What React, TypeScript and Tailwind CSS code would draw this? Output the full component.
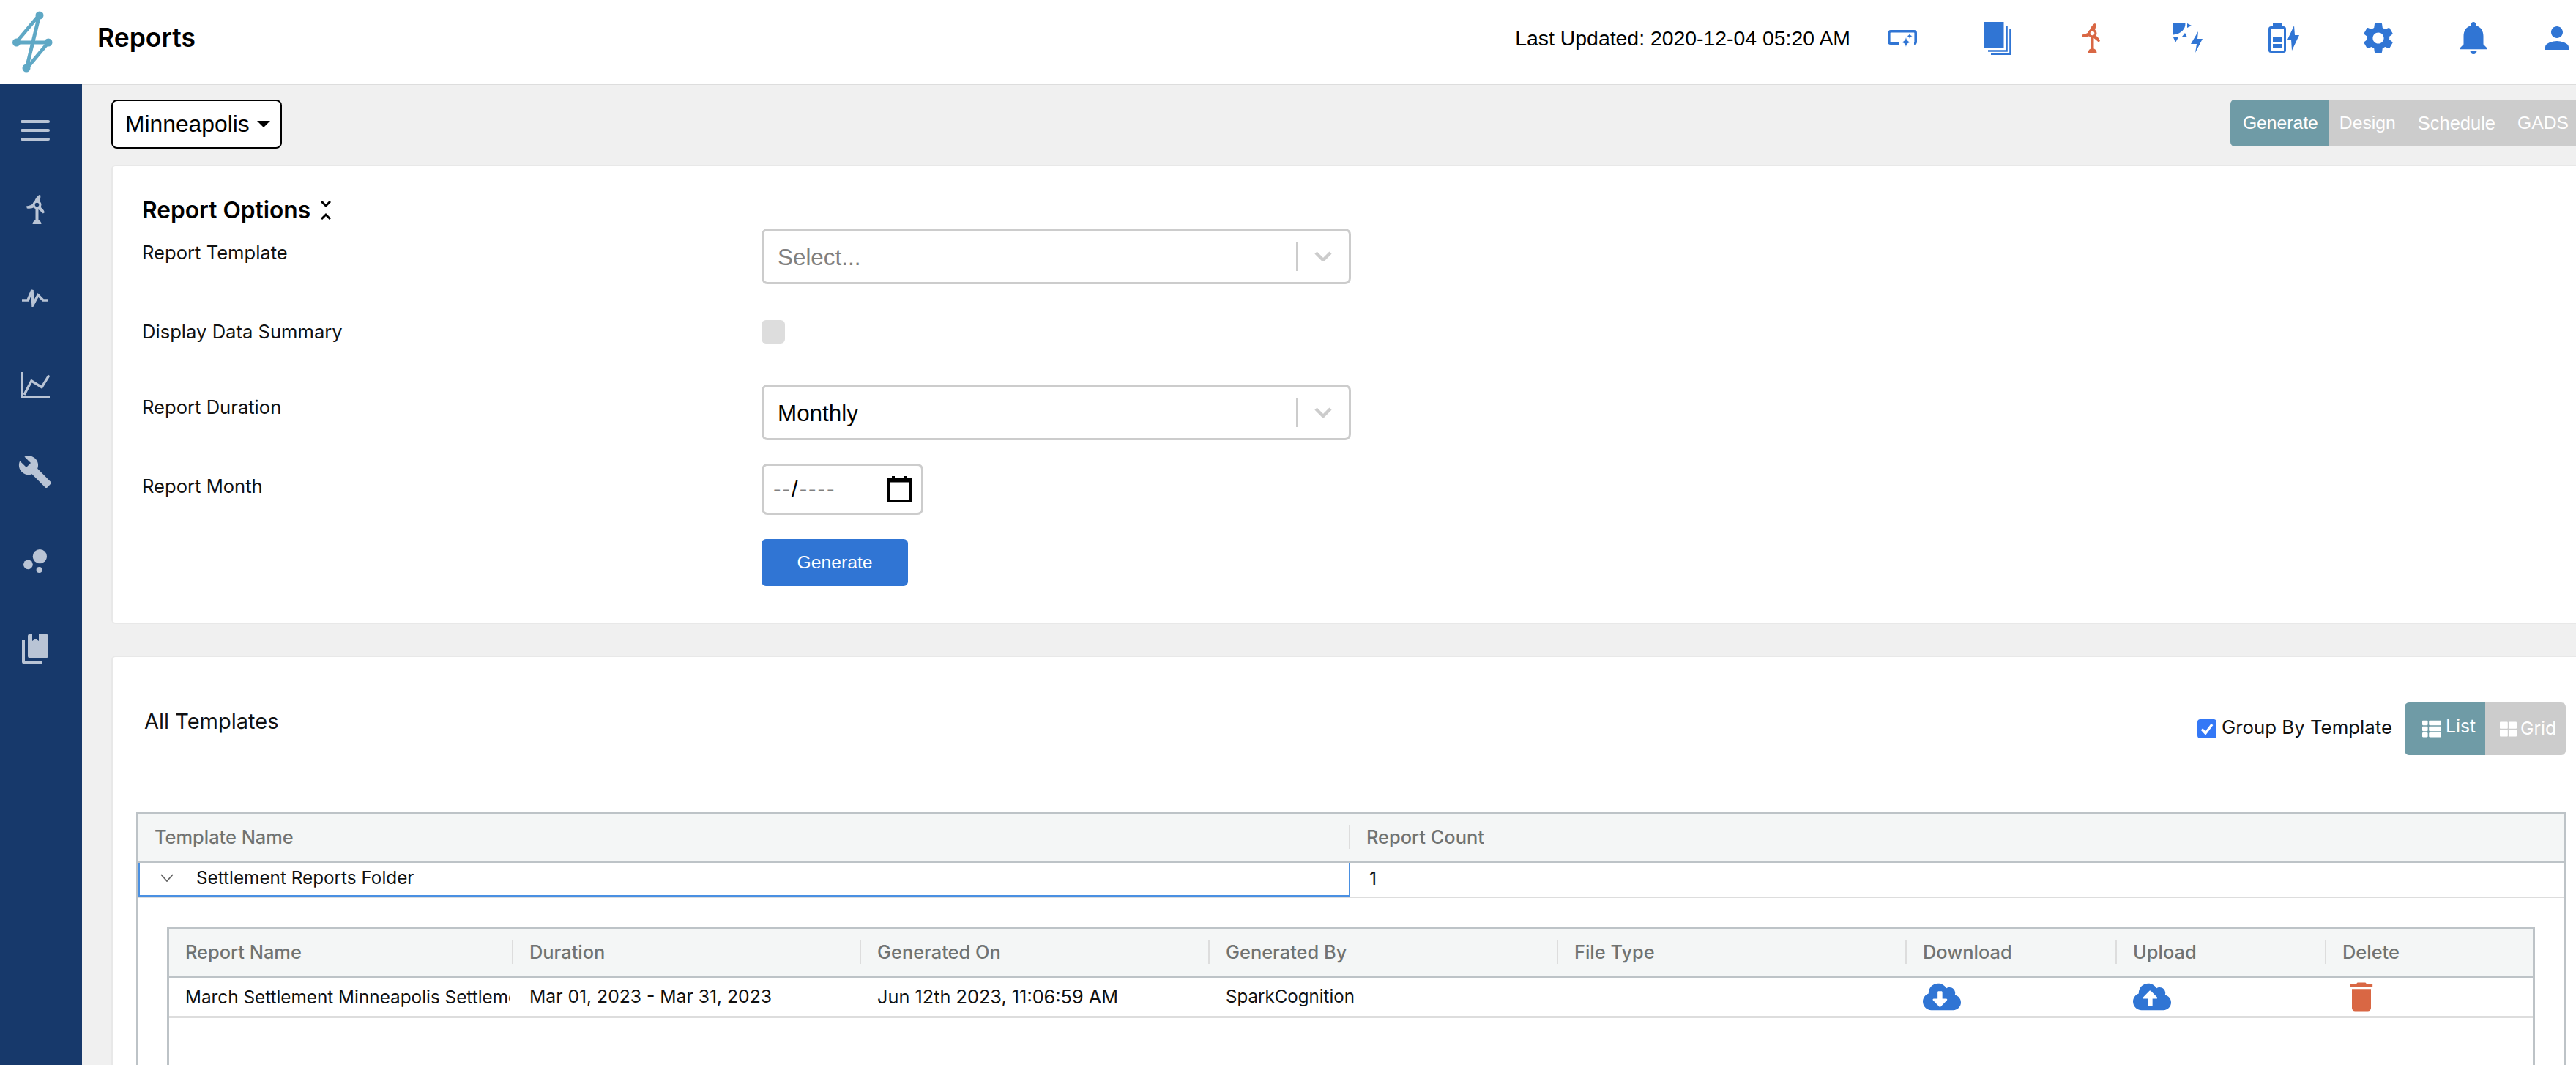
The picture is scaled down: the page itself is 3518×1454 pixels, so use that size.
import { MdBuild, MdBubbleChart, MdDelete } from 'react-icons/md';
import { FaCloudDownloadAlt, FaCloudUploadAlt, FaThLarge, FaThList } from 'react-icons/fa';

const Turbine = ({ className }: { className: string }) => (
  <svg viewBox="0 0 25 40" className={`w-[25px] h-[40px] ${className}`} fill="currentColor">
    <path d="M11 9.5C12 5.5 14.5 2 17.6 0L19.4 .8C19.6 4 18.6 7.5 17.6 10.5z" />
    <path d="M10.5 11.5C7 14 3.5 15 0 15.6L.8 18.4C4.5 19.4 8 18.6 11.5 16.6z" />
    <path d="M18.5 16C21 17.6 24 20.5 25 24L22.8 25.6C20.5 23 17.5 21 15 18.8z" />
    <path fillRule="evenodd" d="M14.5 7.5a6 6 0 1 1 0 12 6 6 0 0 1 0-12zm0 3.2a2.8 2.8 0 1 0 0 5.6 2.8 2.8 0 0 0 0-5.6z" />
    <path d="M12.5 18h4v17h-4z" />
    <path d="M8.5 40a6 6 0 0 1 12 0z" />
  </svg>
);

const Logo = () => (
  <svg viewBox="0 0 55 84" className="w-[55px] h-[84px]" fill="none" stroke="#5fa8c5" strokeWidth="5" strokeLinejoin="round">
    <path d="M37 5L5 43H49L19 79L37 5" />
    <g fill="#5fa8c5" stroke="none">
      <circle cx="37" cy="6" r="5.5" />
      <circle cx="5.5" cy="43" r="5.5" />
      <circle cx="49" cy="43" r="5.5" />
      <circle cx="19" cy="78" r="5.5" />
    </g>
  </svg>
);

const HeaderIcons = () => (
  <div className="flex items-center text-[#3075d4]">
    <svg viewBox="0 0 40 23" className="ml-[51px] w-[40px] h-[23px]" fill="currentColor">
      <path d="M15.5 18.2H4A2.2 2.2 0 0 1 1.8 16V4A2.2 2.2 0 0 1 4 1.8h32A2.2 2.2 0 0 1 38.2 4v12a2.2 2.2 0 0 1-2.2 2.2" fill="none" stroke="currentColor" strokeWidth="3.6" />
      <path d="M25 10c.6 3.6 2.2 5.6 6.4 6.6-4.2 1-5.8 3-6.4 6.4-.6-3.4-2.2-5.4-6.4-6.4 4.2-1 5.8-3 6.4-6.6z" />
      <path d="M30 4.5c.4 2.2 1.3 3.3 3.6 3.8-2.3.5-3.2 1.6-3.6 3.8-.4-2.2-1.3-3.3-3.6-3.8 2.3-.5 3.2-1.6 3.6-3.8z" />
    </svg>
    <svg viewBox="0 0 38 45" className="ml-[91px] w-[38px] h-[45px]" fill="none" stroke="currentColor" strokeWidth="2.6">
      <rect x="0" y="0" width="27.5" height="36" fill="currentColor" stroke="none" />
      <path d="M31.5 5V39.5H6" />
      <path d="M36.5 10V44H10" />
    </svg>
    <Turbine className="ml-[96px] text-[#d96744]" />
    <svg viewBox="0 0 40 40" className="ml-[100px] w-[40px] h-[40px]" fill="currentColor">
      <path d="M0 0H16.5C16.5 7 12 14 0 15.5z" />
      <path d="M19 0L25 3L19 6z" />
      <path d="M0 19H7L3 26z" />
      <path d="M16 13L19 19L12 18z" />
      <path d="M34 11L24 28H32L30 40L40 21H33z" />
    </svg>
    <svg viewBox="0 0 42 40" className="ml-[90px] w-[42px] h-[40px]" fill="currentColor">
      <path d="M6 0H18V4H6z" />
      <rect x="1.5" y="5.5" width="21" height="33" rx="2" fill="none" stroke="currentColor" strokeWidth="3" />
      <path d="M6 19H18V25H6zM6 28H18V34H6z" />
      <path d="M35 3L26 22H31L32 37L42 16H36z" />
    </svg>
    <svg viewBox="2.6 2.5 18.8 19" className="ml-[88px] w-[40px] h-[40px]" fill="currentColor">
      <path d="M19.14 12.94c.04-.3.06-.61.06-.94 0-.32-.02-.64-.07-.94l2.03-1.58c.18-.14.23-.41.12-.61l-1.92-3.32c-.12-.22-.37-.29-.59-.22l-2.39.96c-.5-.38-1.03-.7-1.62-.94l-.36-2.54c-.04-.24-.24-.41-.48-.41h-3.84c-.24 0-.43.17-.47.41l-.36 2.54c-.59.24-1.13.57-1.62.94l-2.39-.96c-.22-.08-.47 0-.59.22L2.74 8.87c-.12.21-.08.47.12.61l2.03 1.58c-.05.3-.09.63-.09.94s.02.64.07.94l-2.03 1.58c-.18.14-.23.41-.12.61l1.92 3.32c.12.22.37.29.59.22l2.39-.96c.5.38 1.03.7 1.62.94l.36 2.54c.05.24.24.41.48.41h3.84c.24 0 .44-.17.47-.41l.36-2.54c.59-.24 1.13-.56 1.62-.94l2.39.96c.22.08.47 0 .59-.22l1.92-3.32c.12-.22.07-.47-.12-.61l-2.01-1.58zM12 15.6c-1.98 0-3.6-1.62-3.6-3.6s1.62-3.6 3.6-3.6 3.6 1.62 3.6 3.6-1.62 3.6-3.6 3.6z" />
    </svg>
    <svg viewBox="4 2.5 16 19.5" className="ml-[92px] w-[36px] h-[44px]" fill="currentColor">
      <path d="M12 22c1.1 0 2-.9 2-2h-4c0 1.1.89 2 2 2zm6-6v-5c0-3.07-1.64-5.64-4.5-6.32V4c0-.83-.67-1.5-1.5-1.5s-1.5.67-1.5 1.5v.68C7.63 5.36 6 7.92 6 11v5l-2 2v1h16v-1l-2-2z" />
    </svg>
    <svg viewBox="4 4 16 16" className="ml-[80px] w-[32px] h-[32px]" fill="currentColor">
      <path d="M12 12c2.21 0 4-1.79 4-4s-1.79-4-4-4-4 1.79-4 4 1.79 4 4 4zm0 2c-2.67 0-8 1.34-8 4v2h16v-2c0-2.66-5.33-4-8-4z" />
    </svg>
  </div>
);

const Sidebar = () => (
  <aside className="w-[112px] shrink-0 bg-[#17396b] pr-[16px] flex flex-col items-center text-[#b9c4d5]">
    <div className="mt-[50px] w-[40px] flex flex-col gap-[8px]">
      <div className="h-[4px] rounded-full bg-[#b9c4d5]" />
      <div className="h-[4px] rounded-full bg-[#b9c4d5]" />
      <div className="h-[4px] rounded-full bg-[#b9c4d5]" />
    </div>
    <Turbine className="mt-[74px]" />
    <svg viewBox="0 0 36 26" className="mt-[87px] w-[36px] h-[26px]" fill="none" stroke="currentColor" strokeWidth="3.6">
      <path d="M0 17H8L14 3L15 23L22 10L29 17H36" />
    </svg>
    <svg viewBox="0 0 40 36" className="mt-[89px] w-[40px] h-[36px]" fill="none" stroke="currentColor">
      <path d="M2 0V34H40" strokeWidth="4" />
      <path d="M5 31L15 12L29 20.6L39 4.5" strokeWidth="3.4" />
    </svg>
    <MdBuild className="mt-[76px] w-[48px] h-[48px]" />
    <MdBubbleChart className="mt-[74px] w-[48px] h-[48px]" />
    <svg viewBox="0 0 36 40" className="mt-[76px] w-[36px] h-[40px]" fill="currentColor">
      <path d="M0 8H4V36H28V40H2A2 2 0 0 1 0 38z" />
      <path d="M10 0H14V9L18.5 6L23 9V0H34A2 2 0 0 1 36 2V30A2 2 0 0 1 34 32H10A2 2 0 0 1 8 30V2A2 2 0 0 1 10 0z" />
    </svg>
  </aside>
);

const Label = ({ children, className = '' }: { children: string; className?: string }) => (
  <div className={`w-[846px] shrink-0 text-[25.6px] leading-[32px] text-[#111] ${className}`}>{children}</div>
);

const SelectBox = ({ value, muted }: { value: string; muted?: boolean }) => (
  <div className="w-[805px] h-[76px] rounded-[8px] border-[3px] border-[#ccc] flex items-center font-['Liberation_Sans',sans-serif] text-[31.4px]">
    <span className={`flex-1 pl-[19px] pt-[3px] ${muted ? 'text-[#808080]' : 'text-black'}`}>{value}</span>
    <span className="w-[2px] h-[40px] bg-[#ccc]" />
    <svg viewBox="0 0 24 14" className="ml-[23px] mr-[23px] w-[24px] h-[14px]" fill="none" stroke="#ccc" strokeWidth="4.5">
      <path d="M2 2L12 12L22 2" />
    </svg>
  </div>
);

const CalendarIcon = () => (
  <svg viewBox="0 0 34 36" className="w-[34px] h-[36px]" fill="none" stroke="black" strokeWidth="4">
    <rect x="2" y="5" width="30" height="29" />
    <path d="M0 6H34" strokeWidth="5" />
    <path d="M9 0V6M25 0V6" />
  </svg>
);

const ReportOptions = () => (
  <section className="h-[627px] shrink-0 bg-white border-[2px] border-r-0 border-[#e8e8e8] rounded-l-[6px] pt-[40px] pl-[40px]">
    <h2 className="flex items-center h-[40px] text-[31.7px] font-semibold text-black">
      Report Options
      <svg viewBox="0 0 14 26" className="ml-[14px] w-[14px] h-[26px]" fill="none" stroke="black" strokeWidth="3">
        <path d="M1 1L7 7L13 1M1 25L7 19L13 25" />
      </svg>
    </h2>
    <div className="mt-[5px] flex">
      <Label className="pt-[17px]">Report Template</Label>
      <SelectBox value="Select..." muted />
    </div>
    <div className="mt-[49px] flex">
      <Label>Display Data Summary</Label>
      <div className="w-[32px] h-[32px] rounded-[6px] bg-[#ddd]" />
    </div>
    <div className="mt-[56px] flex">
      <Label className="pt-[15px]">Report Duration</Label>
      <SelectBox value="Monthly" />
    </div>
    <div className="mt-[32px] flex">
      <Label className="pt-[15px]">Report Month</Label>
      <div className="w-[221px] h-[70px] rounded-[8px] border-[3px] border-[#ccc] flex items-center justify-between pl-[13px] pr-[13px] font-['Liberation_Sans',sans-serif] text-[31.4px] tracking-[2px] text-[#808080]">
        <span>
          --<span className="text-black">/</span>----
        </span>
        <CalendarIcon />
      </div>
    </div>
    <div className="mt-[33px] flex">
      <div className="w-[846px] shrink-0" />
      <button className="w-[200px] h-[64px] rounded-[6px] bg-[#3075d4] text-white text-[24.7px] font-['Liberation_Sans',sans-serif]">
        Generate
      </button>
    </div>
  </section>
);

const HeadCell = ({ children, width, first }: { children: string; width: string; first?: boolean }) => (
  <div className={`flex items-center shrink-0 ${width}`}>
    {!first && <span className="w-[2px] h-[32px] bg-[#ddd] shrink-0" />}
    <span className="pl-[22px] text-[25.4px] font-medium text-[#707372] whitespace-nowrap">{children}</span>
  </div>
);

const cols = [
  ['Report Name', 'w-[468px]'],
  ['Duration', 'w-[475px]'],
  ['Generated On', 'w-[476px]'],
  ['Generated By', 'w-[476px]'],
  ['File Type', 'w-[476px]'],
  ['Download', 'w-[287px]'],
  ['Upload', 'w-[286px]'],
  ['Delete', 'w-[286px]'],
];

const ReportsTable = () => (
  <div className="mt-[40px] ml-[39px] mr-[39px] flex-1 border-x-[3px] border-t-[2px] border-[#bdc3c7]">
    <div className="h-[64px] flex bg-[#f4f6f6] border-b-[3px] border-[#bdc3c7] box-content">
      {cols.map(([name, width], i) => (
        <HeadCell key={name} width={width} first={i === 0}>
          {name}
        </HeadCell>
      ))}
    </div>
    <div className="h-[52px] flex items-center border-b-[3px] border-[#ddd] box-content text-[24.7px] text-[#111]">
      <div className="w-[466px] shrink-0 pl-[22px] overflow-hidden whitespace-nowrap text-[24.3px]">
        March Settlement Minneapolis Settlement Report
      </div>
      <div className="w-[477px] shrink-0 pl-[26px]">Mar 01, 2023 - Mar 31, 2023</div>
      <div className="w-[476px] shrink-0 pl-[24px] text-[25.3px]">Jun 12th 2023, 11:06:59 AM</div>
      <div className="w-[476px] shrink-0 pl-[24px] text-[24.1px]">SparkCognition</div>
      <div className="w-[476px] shrink-0" />
      <div className="w-[287px] shrink-0 pl-[24px]">
        <FaCloudDownloadAlt className="w-[52px] h-[42px] text-[#3075d4]" />
      </div>
      <div className="w-[286px] shrink-0 pl-[24px]">
        <FaCloudUploadAlt className="w-[52px] h-[42px] text-[#3075d4]" />
      </div>
      <div className="w-[286px] shrink-0 pl-[24px]">
        <MdDelete className="w-[52px] h-[52px] text-[#d96744]" />
      </div>
    </div>
  </div>
);

const AllTemplates = () => (
  <section className="mt-[43px] flex-1 bg-white border-[2px] border-r-0 border-b-0 border-[#e8e8e8] rounded-tl-[6px] pt-[62px] pl-[32px] pr-[14px] flex flex-col">
    <div className="h-[72px] flex items-center">
      <span className="ml-[11px] mb-[20px] text-[29px] text-[#111]">All Templates</span>
      <span className="ml-auto w-[26px] h-[26px] rounded-[4px] bg-[#3478f6] flex items-center justify-center">
        <svg viewBox="0 0 20 20" className="w-[20px] h-[20px]" fill="none" stroke="white" strokeWidth="3.4">
          <path d="M3 10.5L8 16L17 4" />
        </svg>
      </span>
      <span className="ml-[7px] mb-[4px] text-[25.8px] text-[#111]">Group By Template</span>
      <div className="ml-[17px] h-[72px] flex text-[24.7px] text-white">
        <div className="w-[110px] bg-[#6f9ba6] rounded-l-[6px] flex items-center pl-[23px]">
          <FaThList className="w-[28px] h-[26px]" />
          <span className="ml-[5px] mb-[6px]">List</span>
        </div>
        <div className="w-[110px] bg-[#ccc] rounded-r-[6px] flex items-center pl-[20px]">
          <FaThLarge className="w-[23px] h-[23px]" />
          <span className="ml-[5px]">Grid</span>
        </div>
      </div>
    </div>
    <div className="mt-[78px] flex-1 flex flex-col border-x-[3px] border-t-[2px] border-[#bdc3c7]">
      <div className="h-[64px] flex bg-[#f4f6f6] border-b-[3px] border-[#bdc3c7] box-content">
        <HeadCell width="w-[1653px]" first>
          Template Name
        </HeadCell>
        <HeadCell width="flex-1">Report Count</HeadCell>
      </div>
      <div className="h-[46px] flex border-b-[2px] border-[#ddd] box-content text-[24.7px] text-[#111]">
        <div className="w-[1655px] shrink-0 flex items-center border-[2.5px] border-t-0 border-[#4a90e2] pl-[28px] pb-[3px]">
          <svg viewBox="0 0 18 11" className="w-[18px] h-[11px]" fill="none" stroke="#666" strokeWidth="1.8">
            <path d="M1 1L9 10L17 1" />
          </svg>
          <span className="ml-[31px] text-[24.3px]">Settlement Reports Folder</span>
        </div>
        <div className="flex-1 flex items-center pl-[26px] pb-[3px]">1</div>
      </div>
      <ReportsTable />
    </div>
  </section>
);

export default function App() {
  return (
    <div className="w-[3518px] h-[1454px] overflow-hidden flex flex-col bg-white font-['Inter',sans-serif]">
      <header className="h-[114px] shrink-0 flex items-center bg-white pl-[17px] pr-[10px] pb-[10px]">
        <div className="mt-[10px]">
          <Logo />
        </div>
        <h1 className="ml-[61px] text-[35.5px] font-semibold text-black">Reports</h1>
        <span className="ml-auto font-['Liberation_Sans',sans-serif] text-[28.4px] text-black">
          Last Updated: 2020-12-04 05:20 AM
        </span>
        <HeaderIcons />
      </header>
      <div className="flex-1 min-h-0 flex">
        <Sidebar />
        <main className="flex-1 min-w-0 flex flex-col bg-[#f0f0f0] border-t-[2px] border-[#ddd] pt-[20px] pl-[40px]">
          <div className="flex justify-between items-start h-[89px] shrink-0">
            <button className="w-[233px] h-[67px] rounded-[8px] border-[2px] border-black bg-white flex items-center pl-[17px] font-['Liberation_Sans',sans-serif] text-[31.8px] text-black">
              Minneapolis
              <span className="ml-[10px] w-0 h-0 border-x-[9px] border-t-[9px] border-x-transparent border-t-black" />
            </button>
            <div className="flex h-[64px] font-['Liberation_Sans',sans-serif] text-[24.7px] text-white items-stretch">
              <div className="bg-[#6f9ba6] rounded-l-[6px] pl-[17px] pr-[14px] flex items-center">Generate</div>
              <div className="bg-[#ccc] pl-[15px] pr-[15px] flex items-center">Design</div>
              <div className="bg-[#ccc] pl-[15px] pr-[15px] flex items-center text-[25.5px]">Schedule</div>
              <div className="bg-[#ccc] pl-[15px] pr-[10px] flex items-center">GADS</div>
            </div>
          </div>
          <ReportOptions />
          <AllTemplates />
        </main>
      </div>
    </div>
  );
}
